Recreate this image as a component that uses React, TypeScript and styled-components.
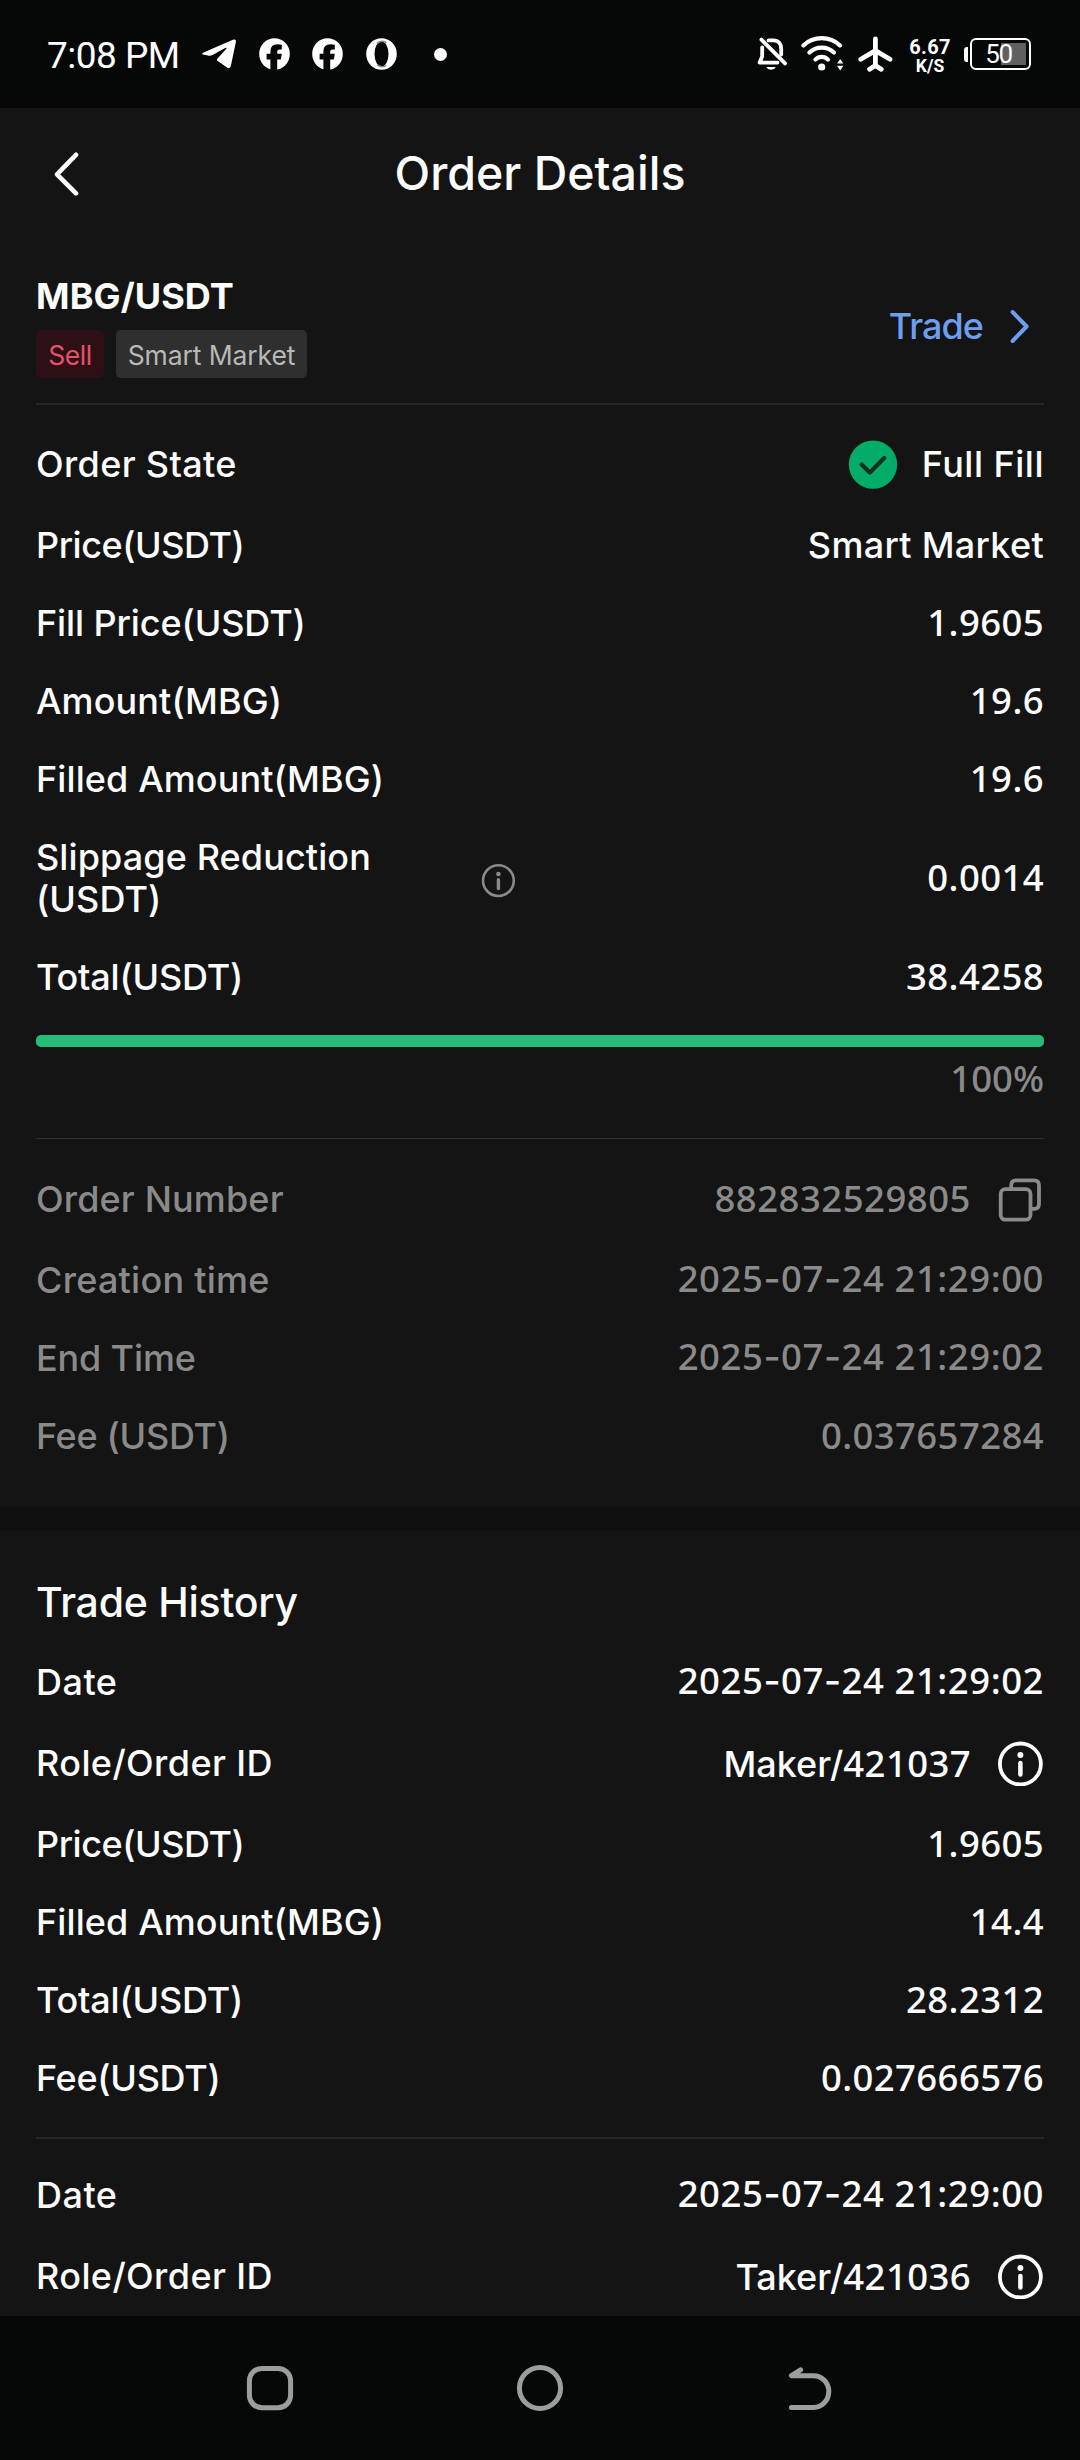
import React from 'react';
import styled, { createGlobalStyle } from 'styled-components';

const GlobalStyle = createGlobalStyle`
  *, *::before, *::after { box-sizing: border-box; }
  body {
    margin: 0;
    background: #141414;
    color: #fcfcfc;
    font-family: Inter, "Noto Sans", sans-serif;
    overflow: hidden;
  }
  svg { display: block; flex: none; }
`;

const Screen = styled.div`
  width: 1080px;
  height: 2460px;
  display: flex;
  flex-direction: column;
  background: #141414;
`;

/* ---------- status bar ---------- */

const StatusBar = styled.header`
  flex: none;
  height: 108px;
  padding: 0 49px 0 47px;
  display: flex;
  align-items: center;
  justify-content: space-between;
  background: #060807;
  color: #fff;
`;

const StatusGroup = styled.div`
  display: flex;
  align-items: center;
`;

const Clock = styled.span`
  width: 155px;
  font: 400 37px/44px Roboto, sans-serif;
  letter-spacing: -0.5px;
  white-space: nowrap;
  padding-top: 3px;
`;

const NoticeIcons = styled.div`
  display: flex;
  align-items: center;
  gap: 22.5px;
`;

const Dot = styled.span`
  width: 13px;
  height: 13px;
  margin-left: 15px;
  border-radius: 50%;
  background: #fff;
`;

const SignalIcons = styled.div`
  display: flex;
  align-items: center;
  gap: 14px;
`;

const NetSpeed = styled.div`
  width: 44px;
  margin: 4px 12px 0 15px;
  display: flex;
  flex-direction: column;
  align-items: center;
  font-family: Roboto, sans-serif;
  font-weight: 700;
  white-space: nowrap;
`;

const SpeedValue = styled.span`
  font-size: 20px;
  line-height: 19px;
  letter-spacing: 0.3px;
`;

const SpeedUnit = styled.span`
  font-size: 17.5px;
  line-height: 18px;
`;

const BatteryNub = styled.span`
  width: 4px;
  height: 15px;
  margin-right: 2px;
  border-radius: 3px 0 0 3px;
  background: #fff;
`;

const BatteryBody = styled.div`
  width: 61px;
  height: 32px;
  padding-right: 4px;
  border: 2px solid #fff;
  border-radius: 6px;
  display: flex;
  align-items: center;
  justify-content: center;
  background: linear-gradient(#606060, #606060) 29px 3px / 25px 22px no-repeat;
  font: 400 26px/28px Roboto, sans-serif;
  letter-spacing: -1.4px;
`;

/* ---------- page header ---------- */

const TitleBar = styled.div`
  flex: none;
  height: 130px;
  padding: 0 54px;
  display: grid;
  grid-template-columns: 100px 1fr 100px;
  align-items: center;
`;

const Title = styled.h1`
  margin: 0;
  text-align: center;
  font-size: 46.5px;
  font-weight: 500;
  line-height: 60px;
  letter-spacing: 0;
  white-space: nowrap;
`;

/* ---------- content ---------- */

const Content = styled.main`
  flex: 1;
  min-height: 0;
  overflow: hidden;
`;

const Section = styled.section`
  padding: 0 36px;
`;

const PairRow = styled.div`
  padding: 36px 0 25px;
  display: flex;
  align-items: center;
  justify-content: space-between;
`;

const PairName = styled.div`
  font-size: 36px;
  font-weight: 700;
  line-height: 44px;
  letter-spacing: 0.1px;
`;

const Tags = styled.div`
  display: flex;
  gap: 12px;
  margin-top: 12px;
`;

const Tag = styled.span<{ $sell?: boolean }>`
  width: ${p => (p.$sell ? 68 : 191)}px;
  height: 48px;
  border-radius: 5px;
  text-align: center;
  line-height: 50px;
  font-size: 26.5px;
  letter-spacing: ${p => (p.$sell ? -0.4 : -0.1)}px;
  white-space: nowrap;
  background: ${p => (p.$sell ? '#2c1015' : '#2f2f2f')};
  color: ${p => (p.$sell ? '#e8506b' : '#b8b8b8')};
`;

const TradeLink = styled.a`
  display: flex;
  align-items: center;
  gap: 27px;
  margin-right: 14px;
  color: #6a9ff2;
  font-size: 36px;
  font-weight: 500;
  line-height: 44px;
  letter-spacing: -0.95px;
`;

const Divider = styled.div<{ $w?: number }>`
  height: ${p => p.$w ?? 2}px;
  background: ${p => (p.$w === 1 ? '#303030' : '#272727')};
`;

const Rows = styled.div<{ $top: number; $muted?: boolean }>`
  padding-top: ${p => p.$top}px;
  color: ${p => (p.$muted ? '#8a8a8a' : '#fcfcfc')};
`;

const Row = styled.div<{ $h?: number }>`
  height: ${p => p.$h ?? 78}px;
  display: flex;
  align-items: center;
  justify-content: space-between;
  font-size: 36px;
  font-weight: 500;
  line-height: 42px;
  white-space: nowrap;
`;

const Label = styled.span<{ $ls: number }>`
  letter-spacing: ${p => p.$ls}px;
`;

const WideLabel = styled.div`
  width: 480px;
  display: flex;
  align-items: center;
  justify-content: space-between;
`;

const Value = styled.span<{ $ls?: number; $icon?: boolean }>`
  display: flex;
  align-items: center;
  gap: ${p => (p.$icon ? 27 : 0)}px;
  letter-spacing: ${p => p.$ls ?? 0}px;
`;

const Digits = styled.span<{ $ls?: number }>`
  font-family: "Noto Sans", sans-serif;
  font-size: 36.5px;
  letter-spacing: ${p => p.$ls ?? 0.4}px;
  padding-bottom: 3px;
`;

const Dash = styled.span`
  font-family: Inter, sans-serif;
  font-size: 37px;
`;

const StateText = styled.span`
  margin-left: -3px;
  letter-spacing: 0.5px;
`;

const Progress = styled.div`
  height: 12px;
  margin-top: 19px;
  border-radius: 5px;
  background: #303030;
  overflow: hidden;
`;

const ProgressFill = styled.div`
  width: 100%;
  height: 100%;
  background: #25bd79;
`;

const Percent = styled.div`
  height: 91px;
  padding-top: 9px;
  text-align: right;
  color: #8a8a8a;
  font-size: 36px;
  line-height: 44px;
  font-weight: 500;
`;

const Band = styled.div`
  height: 24px;
  margin-top: 32px;
  background: #0f0f0f;
`;

const SectionTitle = styled.h2`
  margin: 0;
  padding-top: 46px;
  height: 112px;
  font-size: 41px;
  font-weight: 500;
  line-height: 50px;
  letter-spacing: -0.25px;
`;

/* ---------- navigation bar ---------- */

const NavBar = styled.nav`
  flex: none;
  height: 144px;
  padding: 0 135px;
  display: grid;
  grid-template-columns: repeat(3, 1fr);
  align-items: center;
  justify-items: center;
  background: #060807;
`;

/* ---------- icons ---------- */

const TelegramIcon = () => (
  <svg width="34" height="30" viewBox="0 0 34 30" fill="#fff">
    <path d="M1 13.8 L31.5 .6 Q34.4 0 33.9 2.8 L28.8 27.2 Q27.6 30.3 25 28.6 L15.4 21.8 Q14.3 20.6 15.5 19.4 L24.4 9.8 Q24.6 8.4 23.2 9 L10.5 15.9 Q8.5 17.1 6 16.5 L1 15.6 Q-.6 14.8 1 13.8Z" />
  </svg>
);

const FacebookIcon = () => (
  <svg width="31" height="32" viewBox="0 0 31 32">
    <ellipse cx="15.5" cy="16" rx="15.3" ry="15.8" fill="#fff" />
    <path d="M11.4 32V21.6H7.6V15.8H11.4V13.2Q11.4 6.2 18.4 6.2Q21 6.2 22.8 6.7V11.4H20.6Q18.2 11.4 18.2 13.8V15.8H22.8L21.8 21.6H18.2V32Z" fill="#060807" />
  </svg>
);

const OperaIcon = () => (
  <svg width="31" height="32" viewBox="0 0 31 32">
    <ellipse cx="15.5" cy="16" rx="15.3" ry="15.8" fill="#fff" />
    <ellipse cx="15.5" cy="16" rx="7" ry="12.6" fill="#060807" />
    <path d="M11 5.4Q15.5 1.6 20.4 4.6M11 26.6Q15.5 30.4 20.4 27.4" fill="none" stroke="#8b8c8c" strokeWidth="1.6" />
  </svg>
);

const BellOffIcon = () => (
  <svg width="30" height="34" viewBox="0 0 30 34" fill="none" stroke="#fff" strokeWidth="3.8" strokeLinejoin="round" strokeLinecap="round">
    <path d="M5.2 10.5V19.5L2.6 25.6H20.5" />
    <path d="M11.5 3.4H16.5C21.5 3.4 24.2 7 24.2 12V17.5" />
    <path d="M4.4 2.6L28 26.4" />
    <path d="M9.4 30H18.8Q17.4 32.8 14.1 32.8Q10.8 32.8 9.4 30Z" fill="#fff" stroke="none" />
  </svg>
);

const WifiIcon = () => (
  <svg width="43" height="36" viewBox="0 0 43 36" fill="none" stroke="#fff" strokeWidth="4.2" strokeLinecap="round">
    <path d="M2.4 9.4Q10 2.2 20.7 2.2T39 9.4" />
    <path d="M8.4 16.6Q13.4 11.6 20.7 11.6T33 16.6" />
    <path d="M14.4 23.6Q17 20.9 20.7 20.9T27 23.6" />
    <circle cx="20.7" cy="31" r="3.6" fill="#fff" stroke="none" />
    <path d="M39.2 23L42.4 27.6H36ZM39.2 34.4L42.4 29.8H36Z" fill="#fff" stroke="none" />
  </svg>
);

const AirplaneIcon = () => (
  <svg width="35" height="36" viewBox="0 0 35 36" fill="none" stroke="#fff" strokeWidth="4.8" strokeLinecap="round" strokeLinejoin="round">
    <path d="M17.4 3V30" />
    <path d="M2.8 23.2L17.4 14.6L32 23.2" />
    <path d="M11.6 33.2L17.4 29.4L23.2 33.2" />
  </svg>
);

const BackIcon = () => (
  <svg width="26" height="46" viewBox="0 0 26 46" fill="none" stroke="#fcfcfc" strokeWidth="4.6" strokeLinecap="round" strokeLinejoin="round">
    <path d="M22 4.8L3 24.3L22 43.4" />
  </svg>
);

const ForwardIcon = () => (
  <svg width="20" height="34" viewBox="0 0 20 34" fill="none" stroke="#6a9ff2" strokeWidth="4" strokeLinecap="round" strokeLinejoin="round">
    <path d="M2.6 3L16.6 17.5L2.6 32" />
  </svg>
);

const CheckIcon = () => (
  <svg width="50" height="50" viewBox="0 0 50 50">
    <circle cx="25" cy="25.6" r="24.2" fill="#03ac67" />
    <path d="M13.6 25.5L21.8 33.6L36.2 19" fill="none" stroke="#16301f" strokeWidth="4.2" strokeLinecap="round" strokeLinejoin="round" />
  </svg>
);

const SmallInfoIcon = () => (
  <svg width="35" height="39" viewBox="0 0 35 39">
    <circle cx="17.4" cy="21.6" r="15.4" fill="none" stroke="#8a8a8a" strokeWidth="2.6" />
    <circle cx="17.4" cy="15" r="2.3" fill="#8a8a8a" />
    <path d="M17.4 20.8V29.6" stroke="#8a8a8a" strokeWidth="3.4" strokeLinecap="round" />
  </svg>
);

const InfoIcon = () => (
  <svg width="46" height="46" viewBox="0 0 46 46">
    <circle cx="22.4" cy="24" r="20.5" fill="none" stroke="#fcfcfc" strokeWidth="3.8" />
    <circle cx="22.4" cy="15" r="3" fill="#fcfcfc" />
    <path d="M22.4 23V34.6" stroke="#fcfcfc" strokeWidth="4.5" strokeLinecap="round" />
  </svg>
);

const CopyIcon = () => (
  <svg width="46" height="46" viewBox="0 0 46 46" fill="none" stroke="#8a8a8a" strokeWidth="3.8">
    <rect x="2.7" y="13.2" width="29.8" height="30.4" rx="4.5" />
    <path d="M13.2 12.5V9.2Q13.2 4.3 18 4.3H36.2Q41 4.3 41 9.2V28Q41 32.8 36.2 32.8H33" />
  </svg>
);

const RecentsIcon = () => (
  <svg width="48" height="48" viewBox="0 0 48 48">
    <rect x="3.4" y="4.4" width="41.2" height="39.4" rx="12.5" fill="none" stroke="#9c9e9d" strokeWidth="5" />
  </svg>
);

const HomeIcon = () => (
  <svg width="48" height="48" viewBox="0 0 48 48">
    <circle cx="24" cy="24" r="20.6" fill="none" stroke="#9c9e9d" strokeWidth="5" />
  </svg>
);

const ReturnIcon = () => (
  <svg width="48" height="48" viewBox="0 0 48 48" fill="none" stroke="#9c9e9d" strokeWidth="5" strokeLinecap="round" strokeLinejoin="round">
    <path d="M14.6 5.8L5.4 11.7H27.5A15.3 15.85 0 0 1 27.5 43.4H5.4" />
  </svg>
);

/* ---------- values ---------- */

const Timestamp = ({ value }: { value: string }) => (
  <Digits $ls={0.55}>
    {value.split('-').map((part, i) => (
      <React.Fragment key={i}>
        {i > 0 && <Dash>-</Dash>}
        {part}
      </React.Fragment>
    ))}
  </Digits>
);

const RoleId = ({ role, id }: { role: string; id: string }) => (
  <Value $icon>
    <span>
      {role}/<Digits>{id}</Digits>
    </span>
    <InfoIcon />
  </Value>
);

/* ---------- page ---------- */

export default function App() {
  return (
    <Screen>
      <GlobalStyle />
      <StatusBar>
        <StatusGroup>
          <Clock>7:08 PM</Clock>
          <NoticeIcons>
            <TelegramIcon />
            <FacebookIcon />
            <FacebookIcon />
            <OperaIcon />
            <Dot />
          </NoticeIcons>
        </StatusGroup>
        <StatusGroup>
          <SignalIcons>
            <BellOffIcon />
            <WifiIcon />
            <AirplaneIcon />
          </SignalIcons>
          <NetSpeed>
            <SpeedValue>6.67</SpeedValue>
            <SpeedUnit>K/S</SpeedUnit>
          </NetSpeed>
          <BatteryNub />
          <BatteryBody>50</BatteryBody>
        </StatusGroup>
      </StatusBar>

      <TitleBar>
        <BackIcon />
        <Title>Order Details</Title>
      </TitleBar>

      <Content>
        <Section>
          <PairRow>
            <div>
              <PairName>MBG/USDT</PairName>
              <Tags>
                <Tag $sell>Sell</Tag>
                <Tag>Smart Market</Tag>
              </Tags>
            </div>
            <TradeLink>
              Trade
              <ForwardIcon />
            </TradeLink>
          </PairRow>
          <Divider />

          <Rows $top={17}>
            <Row $h={84}>
              <Label $ls={0.35}>Order State</Label>
              <Value $icon>
                <CheckIcon />
                <StateText>Full Fill</StateText>
              </Value>
            </Row>
            <Row>
              <Label $ls={-0.45}>Price(USDT)</Label>
              <Value $ls={0.3}>Smart Market</Value>
            </Row>
            <Row>
              <Label $ls={-0.1}>Fill Price(USDT)</Label>
              <Digits>1.9605</Digits>
            </Row>
            <Row>
              <Label $ls={0.1}>Amount(MBG)</Label>
              <Digits>19.6</Digits>
            </Row>
            <Row>
              <Label $ls={0.1}>Filled Amount(MBG)</Label>
              <Digits>19.6</Digits>
            </Row>
            <Row $h={120}>
              <WideLabel>
                <Label $ls={0.1}>
                  Slippage Reduction
                  <br />
                  (USDT)
                </Label>
                <SmallInfoIcon />
              </WideLabel>
              <Digits>0.0014</Digits>
            </Row>
            <Row>
              <Label $ls={-0.2}>Total(USDT)</Label>
              <Digits>38.4258</Digits>
            </Row>
          </Rows>
          <Progress>
            <ProgressFill />
          </Progress>
          <Percent>
            <Digits $ls={0}>100%</Digits>
          </Percent>
          <Divider $w={1} />

          <Rows $top={18} $muted>
            <Row $h={84}>
              <Label $ls={0.15}>Order Number</Label>
              <Value $icon>
                <Digits $ls={0.5}>882832529805</Digits>
                <CopyIcon />
              </Value>
            </Row>
            <Row>
              <Label $ls={0.25}>Creation time</Label>
              <Timestamp value="2025-07-24 21:29:00" />
            </Row>
            <Row>
              <Label $ls={-0.15}>End Time</Label>
              <Timestamp value="2025-07-24 21:29:02" />
            </Row>
            <Row>
              <Label $ls={-0.3}>Fee (USDT)</Label>
              <Digits>0.037657284</Digits>
            </Row>
          </Rows>
        </Section>

        <Band />

        <Section>
          <SectionTitle>Trade History</SectionTitle>
          <Rows $top={0}>
            <Row>
              <Label $ls={0.5}>Date</Label>
              <Timestamp value="2025-07-24 21:29:02" />
            </Row>
            <Row $h={84}>
              <Label $ls={0.4}>Role/Order ID</Label>
              <RoleId role="Maker" id="421037" />
            </Row>
            <Row>
              <Label $ls={-0.45}>Price(USDT)</Label>
              <Digits>1.9605</Digits>
            </Row>
            <Row>
              <Label $ls={0.1}>Filled Amount(MBG)</Label>
              <Digits>14.4</Digits>
            </Row>
            <Row>
              <Label $ls={-0.2}>Total(USDT)</Label>
              <Digits>28.2312</Digits>
            </Row>
            <Row>
              <Label $ls={-0.3}>Fee(USDT)</Label>
              <Digits>0.027666576</Digits>
            </Row>
          </Rows>
          <Rows $top={20}>
            <Divider />
          </Rows>
          <Rows $top={17}>
            <Row>
              <Label $ls={0.5}>Date</Label>
              <Timestamp value="2025-07-24 21:29:00" />
            </Row>
            <Row $h={84}>
              <Label $ls={0.4}>Role/Order ID</Label>
              <RoleId role="Taker" id="421036" />
            </Row>
          </Rows>
        </Section>
      </Content>

      <NavBar>
        <RecentsIcon />
        <HomeIcon />
        <ReturnIcon />
      </NavBar>
    </Screen>
  );
}
